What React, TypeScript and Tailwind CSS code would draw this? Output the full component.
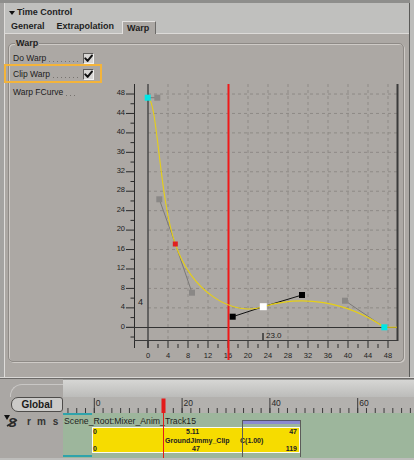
const yv = (v: number) => 327.3 - v * 4.86;
const xf = (f: number) => 148 + f * 5;
const FONT = 'Liberation Sans, Arial, sans-serif';

function Check() {
  return (
    <div className="w-[11px] h-[11px] bg-[#d8d6d4] border border-t-[#5e5c5a] border-l-[#5e5c5a] border-b-[#f0f0ee] border-r-[#f0f0ee] flex items-center justify-center">
      <svg width="9" height="9" viewBox="0 0 9 9">
        <path d="M1.3 4.4 L3.6 6.9 L7.9 1.6" fill="none" stroke="#111" strokeWidth="2" strokeLinecap="round" strokeLinejoin="round" />
      </svg>
    </div>
  );
}

function Row({ label, check }: { label: string; check: boolean }) {
  return (
    <div className="h-[16px] flex items-center">
      <span className="text-[8.5px] leading-none text-[#1c1c1c] whitespace-nowrap">{label}</span>
      <span className="flex-1 h-[1px] self-end mb-[4px] ml-[3px] mr-[5px] bg-[linear-gradient(to_right,#77736f_1px,transparent_1px)] bg-[length:4px_1px]" />
      {check ? <Check /> : <span className="w-[11px]" />}
    </div>
  );
}

function Chart() {
  const ys = Array.from({ length: 13 }, (_, i) => i * 4);
  const minors = Array.from({ length: 13 }, (_, i) => i * 4 - 2);
  const frames = Array.from({ length: 13 }, (_, i) => i * 4);
  const frameMinor = Array.from({ length: 12 }, (_, i) => i * 4 + 2);
  const sq = (x: number, y: number, s: number, fill: string) => (
    <rect x={x - s / 2} y={y - s / 2} width={s} height={s} fill={fill} />
  );
  return (
    <svg width="302" height="316" viewBox="100 44 302 316" className="block shrink-0" fontFamily={FONT}>
      {/* dashed grid */}
      {frames.slice(1).filter((f) => f !== 16).map((f) => (
        <line key={'gv' + f} x1={xf(f)} y1={84} x2={xf(f)} y2={340} stroke="#8e8a86" strokeDasharray="3 3" />
      ))}
      {ys.slice(1).map((v) => (
        <line key={'gh' + v} x1={148} y1={yv(v)} x2={397} y2={yv(v)} stroke="#8e8a86" strokeDasharray="3 3" />
      ))}

      {/* y axis */}
      <line x1={134.5} y1={84} x2={134.5} y2={348} stroke="#2a2a2a" />
      {ys.map((v) => (
        <g key={'yt' + v}>
          <line x1={126} y1={yv(v)} x2={134} y2={yv(v)} stroke="#2a2a2a" />
          <text x={125} y={yv(v) + 1.2} fontSize="7.5" textAnchor="end" fill="#222">{v}</text>
        </g>
      ))}
      {minors.map((v) => (
        <line key={'ym' + v} x1={130.5} y1={yv(v)} x2={134} y2={yv(v)} stroke="#2a2a2a" />
      ))}

      {/* frame 0 line, zero line, box */}
      <line x1={148} y1={84} x2={148} y2={348} stroke="#4a4a4a" strokeWidth="1.5" />
      <line x1={126} y1={327.5} x2={397} y2={327.5} stroke="#333" />
      <line x1={134} y1={340.5} x2={398} y2={340.5} stroke="#3a3a3a" />
      <line x1={397.5} y1={84} x2={397.5} y2={341} stroke="#3a3a3a" strokeWidth="2" />

      {/* x ticks */}
      {frames.map((f) => (
        <g key={'xt' + f}>
          <line x1={xf(f)} y1={341} x2={xf(f)} y2={348} stroke="#2a2a2a" />
          <text x={xf(f)} y={358} fontSize="7.5" textAnchor="middle" fill="#222">{f}</text>
        </g>
      ))}
      {frameMinor.map((f) => (
        <line key={'xm' + f} x1={xf(f)} y1={344} x2={xf(f)} y2={348} stroke="#2a2a2a" />
      ))}

      {/* current frame readouts */}
      <line x1={263} y1={333} x2={263} y2={340} stroke="#333" strokeWidth="1.5" />
      <text x={266} y={337.5} fontSize="8" fill="#222">23.0</text>
      <text x={138} y={305} fontSize="9" fill="#222">4</text>

      {/* red time line */}
      <line x1={228.5} y1={84} x2={228.5} y2={360} stroke="#f01818" strokeWidth="2" />

      {/* handles */}
      <polyline points="147.7,97.7 157.3,97.7" fill="none" stroke="#7c7a78" />
      <polyline points="159.3,199.3 175.3,244 192,292.7" fill="none" stroke="#7c7a78" />
      <polyline points="345,300.7 384.3,327.3" fill="none" stroke="#7c7a78" />
      <polyline points="232.7,316.7 263.3,306.7 302,295" fill="none" stroke="#111" />

      {/* fcurve */}
      <path
        d="M147.7 97.7 C157.3 97.7 159.3 199.3 175.3 244 C192 292.7 232.7 316.7 263.3 306.7 C302 295 345 300.7 384.3 327.3 L397 327.3"
        fill="none"
        stroke="#e6cf16"
        strokeWidth="1.1"
      />

      {/* keys */}
      {sq(157.3, 97.7, 6, '#8a8886')}
      {sq(159.3, 199.3, 6, '#8a8886')}
      {sq(192, 292.7, 6, '#8a8886')}
      {sq(345, 300.7, 6, '#8a8886')}
      {sq(147.7, 97.7, 6, '#00e6e6')}
      {sq(175.3, 244, 5, '#e02020')}
      {sq(232.7, 316.7, 6, '#000')}
      {sq(302, 295, 6, '#000')}
      {sq(263.3, 306.7, 7, '#fff')}
      {sq(384.3, 327.3, 6, '#00e6e6')}
    </svg>
  );
}

function Ruler() {
  const x0 = 94.3;
  const k = 4.39;
  const minor = Array.from({ length: 40 }, (_, i) => -6 + i * 2);
  return (
    <svg width="351" height="16" viewBox="63 397 351 16" className="block shrink-0" fontFamily={FONT}>
      <rect x="63" y="397" width="351" height="16" fill="#b3b1ae" />
      {minor.map((f) => (
        <line key={f} x1={x0 + f * k} y1={408} x2={x0 + f * k} y2={413} stroke="#3a3a3a" />
      ))}
      {[0, 20, 40, 60].map((f) => (
        <g key={'M' + f}>
          <line x1={x0 + f * k} y1={398} x2={x0 + f * k} y2={413} stroke="#3a3a3a" />
          <text x={x0 + f * k + 1.5} y={405.5} fontSize="8.5" fill="#2a2a2a">{f}</text>
        </g>
      ))}
      <rect x="161.5" y="398.5" width="4" height="14.5" fill="#e31b1b" />
    </svg>
  );
}

export default function App() {
  return (
    <div className="w-[414px] h-[460px] overflow-hidden bg-[#bdbdbb] font-['Liberation_Sans',Arial,sans-serif] text-[#1e1e1e]">
      <div className="w-[410px]">
        <div className="h-[3px] bg-[#8e8e8c]" />
        <div className="flex h-[374px]">
          <div className="w-[4px] bg-[#a4a3a1]" />
          <div className="flex-1 flex flex-col border-l border-r border-l-[#dedcda] border-r-[#5a5a58]">
            {/* header */}
            <div className="bg-[#c0c0be]">
              <div className="h-[17px] flex items-center pl-[4px] pt-[1px]">
                <svg width="6" height="4" viewBox="0 0 6 4" className="mt-[1px]">
                  <path d="M0 0 H6 L3 4 Z" fill="#111" />
                </svg>
                <span className="ml-[2px] text-[9px] font-bold leading-none">Time Control</span>
              </div>
              <div className="h-[13px] flex items-end">
                <span className="ml-[6px] mb-[2px] text-[9px] font-bold leading-none">General</span>
                <span className="ml-[12px] mb-[2px] text-[9px] font-bold leading-none">Extrapolation</span>
                <div className="relative z-10 ml-[8px] -mb-[1px] w-[34px] h-[13px] bg-[#aca8a4] border-t border-l border-r border-t-[#e4e2e0] border-l-[#e4e2e0] border-r-[#6c6a68] pl-[4px] pt-[2px]">
                  <span className="text-[9px] font-bold leading-none block">Warp</span>
                </div>
              </div>
            </div>
            {/* panel */}
            <div className="flex-1 bg-[#aca8a4] border-t border-[#dcdad8] pt-[9px] pl-[3px]">
              <div className="relative w-[396px] h-[319px] rounded-[5px] border border-[#8e8a86] shadow-[inset_1px_1px_0_#cfcbc7,1px_1px_0_#cfcbc7] flex">
                <span className="absolute left-[6px] -top-[5px] px-[1px] bg-[#aca8a4] text-[9px] font-bold leading-none">Warp</span>
                <div className="w-[91px] shrink-0 pl-[4px] pr-[6px] pt-[6px]">
                  <Row label="Do Warp" check />
                  <Row label="Clip Warp" check />
                  <div className="mt-[2px]">
                    <Row label="Warp FCurve" check={false} />
                  </div>
                </div>
                <Chart />
                <div className="absolute left-[-5px] top-[20px] w-[98px] h-[19px] border-2 border-[#f4b43a]" />
              </div>
            </div>
          </div>
        </div>
      </div>

      {/* timeline */}
      <div className="h-[1px] bg-[#dad8d6]" />
      <div className="h-[1px] bg-[#6c6a68]" />
      <div className="flex h-[18px]">
        <div className="w-[63px] bg-[#aaa7a4] pl-[10px] pt-[5px]">
          <div className="h-full rounded-tl-[12px] border-t border-l border-[#c9c7c5]" />
        </div>
        <div className="flex-1 border-t border-[#9a9a98] bg-[linear-gradient(to_bottom,#d6d6d4,#bcbcba)]" />
      </div>
      <div className="flex h-[16px]">
        <div className="w-[63px] bg-[#aaa7a4] pl-[11px]">
          <div className="h-[15px] rounded-l-[7px] rounded-r-[3px] border border-[#4e4c4a] bg-[#cbcac8] flex items-center justify-center text-[10px] font-bold leading-none text-[#1a1a1a]">
            Global
          </div>
        </div>
        <Ruler />
      </div>
      <div className="flex h-[45px]">
        <div className="w-[63px] bg-[#aaa7a4] flex items-start pt-[2px]">
          <div className="relative ml-[4px] w-[14px] h-[13px]">
            <svg className="absolute left-0 top-0" width="6" height="5" viewBox="0 0 6 5">
              <path d="M0 0 H6 L3 5 Z" fill="#111" />
            </svg>
            <span className="absolute left-[4px] top-[1px] text-[13px] font-bold italic leading-none text-[#2a2a2a]">S</span>
            <svg className="absolute left-[2px] top-[3px]" width="12" height="10" viewBox="0 0 12 10">
              <path d="M1 8 L11 2" stroke="#2a2a2a" strokeWidth="1.6" />
            </svg>
          </div>
          <div className="flex items-baseline mt-[2px] text-[10px] font-bold leading-none text-[#333]">
            <span className="ml-[9px]">r</span>
            <span className="ml-[6px]">m</span>
            <span className="ml-[7px]">s</span>
          </div>
        </div>
        <div className="relative flex-1 bg-[#9db69c] pt-[4px] pl-[1px]">
          <div className="absolute left-0 top-0 w-[29px] h-[2px] bg-[#2ea3ab]" />
          <div className="absolute left-0 bottom-[1px] w-[29px] h-[2px] bg-[#2ea3ab]" />
          <span className="block text-[8.7px] leading-none text-[#1e1e1e] whitespace-nowrap">Scene_Root:Mixer_Anim_Track15</span>
          <div className="absolute left-[29px] top-[14px] w-[208px] h-[26px] bg-[#f6dc00] border border-[#fbfbf0] text-[7px] font-bold leading-none text-[#222]">
            <span className="absolute left-[0px] top-[0px]">0</span>
            <span className="absolute left-[93px] top-[0px]">5.11</span>
            <span className="absolute left-[72px] top-[9px] whitespace-nowrap">GroundJimmy_Clip</span>
            <span className="absolute left-[147px] top-[9px] whitespace-nowrap">C(1.00)</span>
            <span className="absolute left-[0px] top-[17px]">0</span>
            <span className="absolute left-[99px] top-[17px]">47</span>
            <span className="absolute right-[2px] top-[0px]">47</span>
            <span className="absolute right-[2px] top-[17px]">119</span>
          </div>
          <div className="absolute left-[179px] top-[7px] w-[59px] h-[37px] border-l border-r border-[#5c5c5a]">
            <div className="h-[4px] border-t border-[#55546a] bg-[#8c8ad0]" />
          </div>
          <div className="absolute left-[100px] top-0 bottom-0 w-[1px] bg-[#e41a1a]" />
        </div>
      </div>
    </div>
  );
}
